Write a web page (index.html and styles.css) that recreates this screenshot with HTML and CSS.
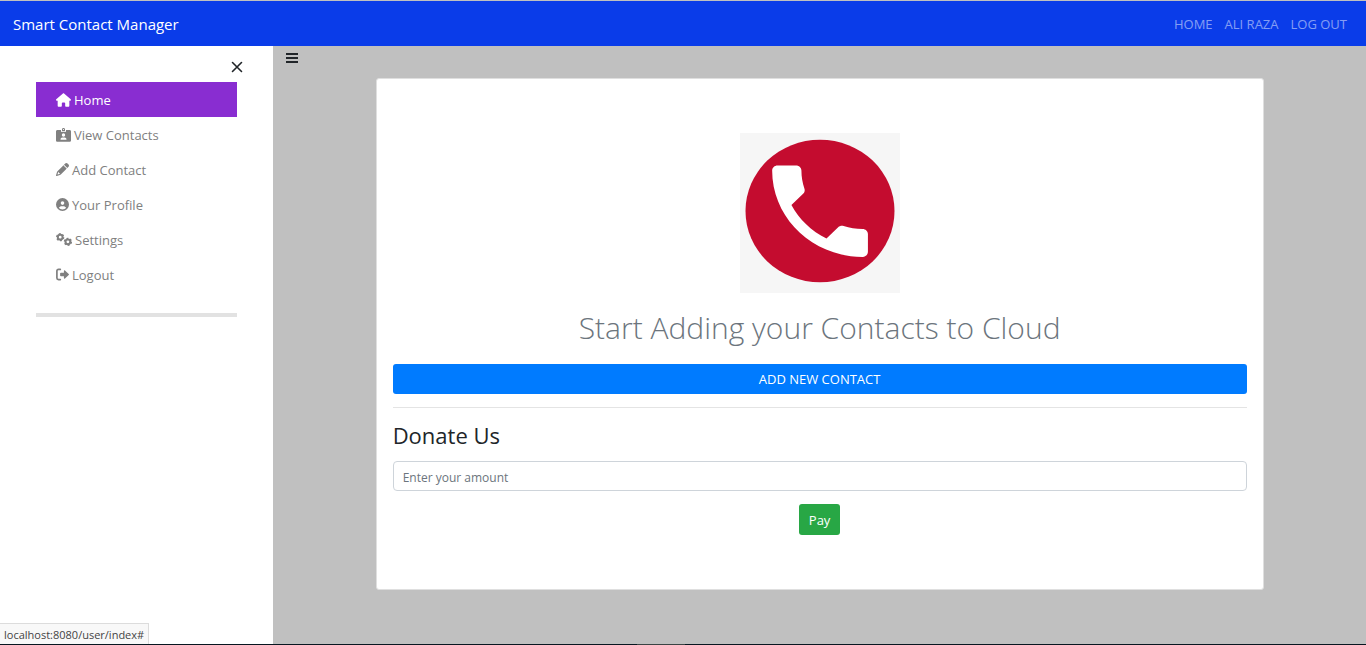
FILE: index.html
```
<!DOCTYPE html>
<html lang="en">
<head>
<meta charset="utf-8">
<meta name="viewport" content="width=device-width, initial-scale=1">
<title>Smart Contact Manager</title>
<link rel="stylesheet" href="styles.css">
</head>
<body>
<header class="navbar">
  <a class="brand" href="#">Smart Contact Manager</a>
  <nav class="nav-links">
    <a href="#">HOME</a>
    <a href="#">ALI RAZA</a>
    <a href="#">LOG OUT</a>
  </nav>
</header>
<div class="layout">
  <aside class="sidebar">
    <button class="close" type="button" aria-label="Close sidebar">
      <svg width="12" height="12" viewBox="0 0 12 12"><path d="M1.500 1.500l9 9M10.500 1.500l-9 9" fill="none" stroke="#212529" stroke-width="1.600" stroke-linecap="round"/></svg>
    </button>
    <nav class="menu">
      <a class="item active" href="#"><svg width="15" height="14" viewBox="0 0 576 512"><path d="M575.800 255.500c0 18-15 32.100-32 32.100h-32l.7 160.200c0 2.700-.2 5.400-.5 8.100V472c0 22.100-17.900 40-40 40H392c-22.100 0-40-17.900-40-40V384c0-17.700-14.300-32-32-32H256c-17.700 0-32 14.300-32 32v88c0 22.100-17.900 40-40 40H104c-22.100 0-40-17.900-40-40V287.600H32c-18 0-32-14-32-32.100c0-9 3-17 10-24L266.400 8c7-7 15-8 22-8s15 2 21 7L564.800 231.500c8 7 12 15 11 24z"/></svg>Home</a>
      <a class="item" href="#"><svg width="15" height="14" viewBox="0 0 15 14"><path fill-rule="evenodd" d="M1.500 2H5v1.200c0 .5.300.8.800.8h3.400c.5 0 .8-.3.800-.8V2h3.500c.8 0 1.500.6 1.500 1.400v9c0 .8-.7 1.400-1.500 1.400h-12C.7 13.800 0 13.200 0 12.400v-9C0 2.600.7 2 1.500 2zM7.500 5.300a1.700 1.700 0 1 0 0 3.400 1.700 1.700 0 0 0 0-3.400zM4.500 11.700h6c0-1.400-.8-2.300-2-2.300h-2c-1.200 0-2 .9-2 2.300z"/><path fill-rule="evenodd" d="M6 1.400C6 .6 6.600 0 7.500 0S9 .6 9 1.400v1.800H6zM7.500.9a.6.6 0 1 0 0 1.200.6.600 0 0 0 0-1.200z"/></svg>View Contacts</a>
      <a class="item" href="#"><svg width="13" height="13" viewBox="0 0 512 512"><path d="M410.300 231l11.300-11.300-33.900-33.900-62.100-62.100L291.700 89.800l-11.300 11.300-22.600 22.600L58.600 322.900c-10.400 10.400-18 23.300-22.200 37.400L1 480.700c-2.500 8.400-.2 17.500 6.100 23.700s15.300 8.500 23.700 6.100l120.300-35.400c14.100-4.200 27-11.800 37.400-22.200L387.700 253.700 410.300 231zM160 399.400l-9.100 22.700c-4 3.100-8.500 5.400-13.300 6.900L59.400 452l23-78.100c1.400-4.900 3.800-9.400 6.900-13.300l22.700-9.100v32c0 8.800 7.200 16 16 16h32zM362.700 18.700L314.300 67.100 444.900 197.700l48.400-48.400c25-25 25-65.500 0-90.500L453.300 18.700c-25-25-65.500-25-90.500 0z"/></svg>Add Contact</a>
      <a class="item" href="#"><svg width="13" height="13" viewBox="0 0 512 512"><path fill-rule="evenodd" d="M399 384.200C376.900 345.800 335.400 320 288 320H224c-47.400 0-88.900 25.800-111 64.200c35.200 39.200 86.200 63.800 143 63.800s107.800-24.700 143-63.800zM0 256a256 256 0 1 1 512 0A256 256 0 1 1 0 256zm256 16a72 72 0 1 0 0-144 72 72 0 1 0 0 144z"/></svg>Your Profile</a>
      <a class="item" href="#"><svg width="16" height="13" viewBox="0 0 16 13"><g fill="none" stroke="#808080"><circle cx="4.200" cy="4.200" r="2.400" stroke-width="2"/><circle cx="4.200" cy="4.200" r="3.500" stroke-width="1.300" stroke-dasharray="1.900 1.765"/><circle cx="11.900" cy="8.800" r="2.400" stroke-width="2"/><circle cx="11.900" cy="8.800" r="3.500" stroke-width="1.300" stroke-dasharray="1.900 1.765"/></g></svg>Settings</a>
      <a class="item" href="#"><svg width="13" height="13" viewBox="0 0 13 13"><path d="M4.300 1.400H2.500C1.500 1.400.9 2 .9 3v7c0 1 .6 1.600 1.600 1.600h1.800" fill="none" stroke="#808080" stroke-width="1.700" stroke-linecap="round"/><path d="M4.100 5.500c0-.5.300-.8.800-.8h3V2.900c0-.7.700-.9 1.100-.5l3.700 3.500c.4.400.4.800 0 1.200L9 10.600c-.4.400-1.100.2-1.100-.5V8.300h-3c-.5 0-.8-.3-.8-.8z"/></svg>Logout</a>
    </nav>
    <hr class="divider">
  </aside>
  <main class="content">
    <button class="toggle" type="button" aria-label="Toggle sidebar">
      <svg width="12" height="12" viewBox="0 0 12 12"><path d="M0 2h12M0 6h12M0 10h12" stroke="#212529" stroke-width="2"/></svg>
    </button>
    <section class="card">
      <svg class="logo" width="160" height="160" viewBox="0 0 160 160" role="img" aria-label="Phone">
        <rect width="160" height="160" fill="#f6f6f6"/>
        <ellipse cx="80" cy="78" rx="74.500" ry="71.300" fill="#c40c2f"/>
        <path transform="translate(16.200 17.200) scale(5.320 5.080)" fill="#fff" d="M6.620 10.790c1.440 2.830 3.760 5.140 6.590 6.590l2.200-2.200c.27-.27.67-.36 1.020-.24 1.120.37 2.330.57 3.570.57.550 0 1 .450 1 1V20c0 .550-.45 1-1 1-9.390 0-17-7.610-17-17 0-.55.450-1 1-1h3.500c.550 0 1 .450 1 1 0 1.250.200 2.450.570 3.570.110.350.030.740-.25 1.020l-2.200 2.200z"/>
      </svg>
      <h1 class="title">Start Adding your Contacts to Cloud</h1>
      <button class="add" type="button">ADD NEW CONTACT</button>
      <hr class="rule">
      <form class="donate">
        <label class="subtitle" for="amount">Donate Us</label>
        <input class="amount" id="amount" type="text" placeholder="Enter your amount">
        <button class="pay" type="button">Pay</button>
      </form>
    </section>
  </main>
</div>
<div class="taskbar"></div>
<div class="status">localhost:8080/user/index#</div>
</body>
</html>
```
FILE: styles.css
```
* { box-sizing: border-box; }
body {
  margin: 0;
  min-height: 100vh;
  display: flex;
  flex-direction: column;
  position: relative;
  font-family: "Open Sans", "Noto Sans", sans-serif;
  font-size: 13px;
  color: #212529;
  background: #fff;
}
a { text-decoration: none; }
button { font: inherit; border: 0; cursor: pointer; }
hr { border: 0; margin: 0; }
.navbar {
  display: flex;
  align-items: center;
  justify-content: space-between;
  height: 46px;
  padding: 0 19px 0 13px;
  border-top: 1px solid #c0c0c0;
  background: #0a3ce9;
}
.brand { font-size: 15px; color: #fff; }
.nav-links { display: flex; gap: 12px; }
.nav-links a { color: rgba(255, 255, 255, .5); }
.layout { flex: 1; display: flex; }
.sidebar {
  width: 20%;
  padding: 12px 36px 0;
  display: flex;
  flex-direction: column;
}
.close {
  align-self: flex-end;
  height: 24px;
  padding: 0 0 6px;
  margin: 0 -6px 0 0;
  background: none;
}
.close svg, .toggle svg { display: block; }
.menu { display: flex; flex-direction: column; }
.item {
  display: flex;
  align-items: center;
  gap: 3px;
  height: 35px;
  padding: 0 20px;
  color: #808080;
}
.item svg { fill: #808080; }
.item.active { background: #892dd1; color: #fff; }
.item.active svg { fill: #fff; }
.divider { height: 4px; margin-top: 21px; background: #e2e2e2; }
.content {
  flex: 1;
  display: flex;
  flex-direction: column;
  background: #c0c0c0;
}
.toggle {
  align-self: flex-start;
  height: 32px;
  padding: 6px 13px 14px;
  background: none;
}
.card {
  display: flex;
  flex-direction: column;
  width: 81.25%;
  margin: 0 auto 54px;
  padding: 54px 16px;
  border: 1px solid #dfdfdf;
  border-radius: 3px;
  background: #fff;
}
.logo { align-self: center; }
.title {
  margin: 13px 0 14px;
  font-size: 30px;
  font-weight: 300;
  line-height: 44px;
  text-align: center;
  color: #6c757d;
}
.add {
  height: 30px;
  border-radius: 3px;
  background: #007bff;
  color: #fff;
}
.rule { height: 1px; margin-top: 13px; background: #e4e4e4; }
.donate { display: flex; flex-direction: column; }
.subtitle { margin: 11px 0 10px; font-size: 22px; line-height: 32px; }
.amount {
  height: 30px;
  padding: 2px 9px 0;
  border: 1px solid #ced4da;
  border-radius: 4px;
  font: inherit;
  font-size: 12px;
  color: #495057;
}
.amount::placeholder { color: #6c757d; opacity: 1; }
.pay {
  align-self: center;
  height: 31px;
  margin-top: 13px;
  padding: 0 10px;
  border-radius: 3px;
  background: #28a745;
  color: #fff;
}
.taskbar {
  height: 1px;
  background: linear-gradient(#3a4444, #3a4444) 637px 0 / 48px 1px no-repeat #071620;
}
.status {
  position: absolute;
  left: 0;
  bottom: 1px;
  padding: 3px 4px 1px;
  border: 1px solid #dcdcdc;
  border-width: 1px 1px 0 0;
  background: #f8f8f8;
  color: #444;
  font-size: 11px;
  line-height: 16px;
}
```
